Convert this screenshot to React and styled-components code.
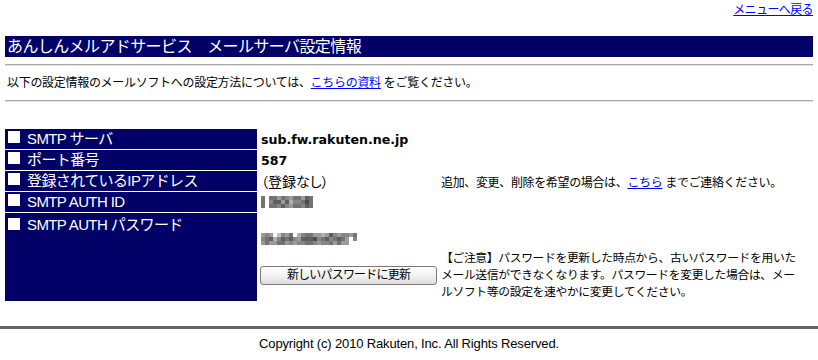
import React from "react";
import styled, { createGlobalStyle } from "styled-components";

const GlobalStyle = createGlobalStyle`
  html, body { margin: 0; padding: 0; background: #ffffff; }
  body {
    font-family: "Liberation Sans", "Noto Sans CJK JP", sans-serif;
    color: #000000;
    font-size: 12px;
  }
`;

const Page = styled.div`
  width: 818px;
`;

const Content = styled.div`
  padding: 0 5px;
`;

const TopNav = styled.div`
  height: 20px;
  line-height: 20px;
  text-align: right;
  font-size: 12px;
  letter-spacing: -0.6px;
`;

const Link = styled.a`
  color: #0000ff;
  text-decoration: underline;
  cursor: pointer;
`;

const TitleBar = styled.h1`
  margin: 16px 0 0;
  height: 21px;
  line-height: 21px;
  background: #000066;
  color: #ffffff;
  font-size: 16px;
  font-weight: normal;
  letter-spacing: -0.6px;
  padding-left: 2px;
  white-space: nowrap;
`;

const Rule = styled.div`
  margin-top: ${(p) => p.$top || 0}px;
  border-top: 1px solid #a8a8a8;
  border-bottom: 1px solid #e4e4e4;
`;

const Intro = styled.p`
  margin: 0;
  height: 34px;
  line-height: 34px;
  padding-left: 2px;
  font-size: 12px;
  letter-spacing: -0.3px;
  white-space: nowrap;
`;

const InfoGrid = styled.div`
  margin-top: 27px;
  display: grid;
  grid-template-columns: 252px 180px 1fr;
  grid-template-rows: 20px 20px 20px 20px 88px;
  column-gap: 2px;
  row-gap: 1px;
`;

const LabelCell = styled.div`
  background: #000066;
  color: #ffffff;
  display: flex;
  align-items: flex-start;
  padding: ${(p) => (p.$tall ? "2px" : "0")} 0 0 3px;
  font-size: 15px;
  line-height: 20px;
  letter-spacing: -0.6px;
  white-space: nowrap;
`;

const Square = styled.span`
  flex: none;
  width: 12px;
  height: 12px;
  background: #ffffff;
  margin: ${(p) => (p.$tall ? "3px" : "2px")} 7px 0 0;
`;

const ValueCell = styled.div`
  display: flex;
  align-items: center;
  padding-left: 2px;
  white-space: nowrap;
  font-size: ${(p) => (p.$bold ? "12.6px" : "14px")};
  font-family: ${(p) =>
    p.$bold ? '"DejaVu Sans", "Noto Sans CJK JP", sans-serif' : 'inherit'};
  font-weight: ${(p) => (p.$bold ? "bold" : "normal")};
  font-feature-settings: ${(p) => (p.$bold ? "normal" : '"palt"')};
`;

const NoteCell = styled.div`
  display: flex;
  align-items: center;
  font-size: 12px;
  letter-spacing: -0.35px;
  white-space: nowrap;
`;

const PasswordArea = styled.div`
  grid-column: 2 / 4;
  display: grid;
  grid-template-columns: 180px 1fr;
  grid-template-rows: 37px 51px;
  column-gap: 2px;
`;

const MaskSlot = styled.div`
  grid-column: 1 / 3;
  display: flex;
  align-items: flex-end;
  padding: 0 0 5px 2px;
`;

const ButtonSlot = styled.div`
  display: flex;
  align-items: center;
  padding-left: 1px;
`;

const UpdateButton = styled.button`
  width: 177px;
  height: 19px;
  padding: 0;
  border: 1px solid #7a7a7a;
  border-radius: 3px;
  background: linear-gradient(#ffffff 0%, #f2f2f2 50%, #dcdcdc 100%);
  font-family: "Liberation Sans", "Noto Sans CJK JP", sans-serif;
  font-size: 12px;
  letter-spacing: -0.8px;
  color: #000000;
  line-height: 17px;
  cursor: pointer;
`;

const Caution = styled.p`
  margin: 0;
  align-self: center;
  font-size: 11.8px;
  line-height: 17px;
  letter-spacing: -0.35px;
  white-space: nowrap;
`;

const FooterRule = styled.div`
  margin-top: 25px;
  height: 3px;
  background: #666666;
`;

const Copyright = styled.div`
  height: 30px;
  line-height: 30px;
  text-align: center;
  font-size: 13px;
  letter-spacing: -0.15px;
`;

const shade = (d) => {
  const v = 255 - d * 20;
  return `rgb(${v},${v},${v})`;
};

function Mosaic({ rows, cell = 4 }) {
  const w = rows[0].length * cell;
  const h = rows.length * cell;
  return (
    <svg width={w} height={h} viewBox={`0 0 ${w} ${h}`} aria-hidden="true">
      {rows.map((r, ri) =>
        r.split("").map((c, ci) =>
          c === "0" ? null : (
            <rect
              key={`${ri}-${ci}`}
              x={ci * cell}
              y={ri * cell}
              width={cell}
              height={cell}
              fill={shade(Number(c))}
            />
          )
        )
      )}
    </svg>
  );
}

const idMask = ["7077576577587", "7068858466797", "7077686577687"];
const pwMask = [
  "565036570467755458656657",
  "678468786588896786787506",
  "575577565667765667575500",
];

function Label({ children, tall }) {
  return (
    <LabelCell $tall={tall}>
      <Square $tall={tall} />
      <span>{children}</span>
    </LabelCell>
  );
}

export default function App() {
  return (
    <Page>
      <GlobalStyle />
      <Content>
        <TopNav>
          <Link>メニューへ戻る</Link>
        </TopNav>
        <TitleBar>あんしんメルアドサービス　メールサーバ設定情報</TitleBar>
        <Rule $top={7} />
        <Intro>
          以下の設定情報のメールソフトへの設定方法については、<Link>こちらの資料</Link> をご覧ください。
        </Intro>
        <Rule />
        <InfoGrid>
          <Label>SMTP サーバ</Label>
          <ValueCell $bold>sub.fw.rakuten.ne.jp</ValueCell>
          <NoteCell />

          <Label>ポート番号</Label>
          <ValueCell $bold>587</ValueCell>
          <NoteCell />

          <Label>登録されているIPアドレス</Label>
          <ValueCell>（登録なし）</ValueCell>
          <NoteCell>
            追加、変更、削除を希望の場合は、<Link>こちら</Link>&nbsp;までご連絡ください。
          </NoteCell>

          <Label>SMTP AUTH ID</Label>
          <ValueCell>
            <Mosaic rows={idMask} />
          </ValueCell>
          <NoteCell />

          <Label tall>SMTP AUTH パスワード</Label>
          <PasswordArea>
            <MaskSlot>
              <Mosaic rows={pwMask} />
            </MaskSlot>
            <ButtonSlot>
              <UpdateButton type="button">新しいパスワードに更新</UpdateButton>
            </ButtonSlot>
            <Caution>
              【ご注意】パスワードを更新した時点から、古いパスワードを用いた
              <br />
              メール送信ができなくなります。パスワードを変更した場合は、メー
              <br />
              ルソフト等の設定を速やかに変更してください。
            </Caution>
          </PasswordArea>
        </InfoGrid>
      </Content>
      <FooterRule />
      <Copyright>Copyright (c) 2010 Rakuten, Inc. All Rights Reserved.</Copyright>
    </Page>
  );
}
